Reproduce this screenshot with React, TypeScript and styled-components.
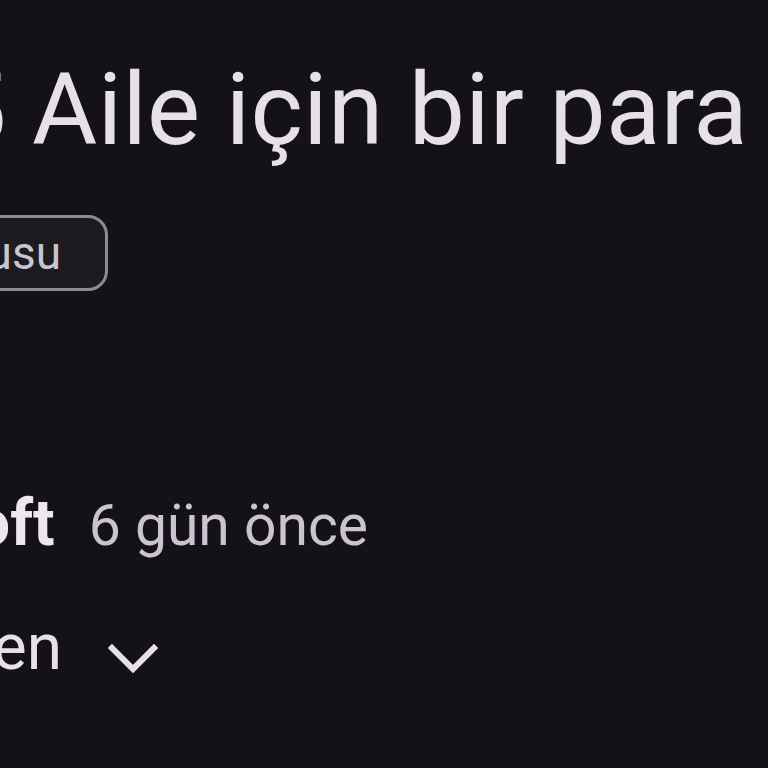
import styled, { createGlobalStyle } from "styled-components";

const GlobalStyle = createGlobalStyle`
  html, body {
    margin: 0;
    padding: 0;
    background: #141218;
    overflow: hidden;
  }
  body {
    font-family: "Roboto", "Open Sans", sans-serif;
    color: #e6e0e9;
  }
`;

const Screen = styled.div`
  width: 768px;
  height: 768px;
  overflow: hidden;
  background: #141218;
  display: flex;
  flex-direction: column;
`;

// rows end at a given x and spill over the left edge
const Row = styled.div<{ $end: number; $top: number }>`
  width: ${(p) => p.$end}px;
  margin-top: ${(p) => p.$top}px;
  display: flex;
  justify-content: flex-end;
  align-items: center;
  white-space: nowrap;
  flex-shrink: 0;
`;

const Title = styled.h1`
  margin: 0;
  font-size: 100px;
  font-weight: 400;
  line-height: 1;
  letter-spacing: 0.4px;
  color: #e6e0e9;
`;

const Chip = styled.span`
  display: inline-flex;
  align-items: center;
  height: 70px;
  padding: 0 44px 0 24px;
  border: 3px solid #8e8a93;
  border-radius: 20px;
  background: #1d1b20;
  font-size: 46px;
  color: #cac4d0;
`;

const Meta = styled.div`
  display: flex;
  align-items: baseline;
  gap: 34px;
`;

const Author = styled.span`
  font-size: 64px;
  font-weight: 700;
  color: #ece6ee;
`;

const Time = styled.span`
  font-size: 57px;
  color: #cac4d0;
`;

const Toggle = styled.div`
  display: flex;
  align-items: center;
  gap: 46px;
  font-size: 64px;
  line-height: 1;
  color: #e6e0e9;
  svg {
    width: 50px;
    height: 30px;
    margin-top: 22px;
  }
`;

export default function App() {
  return (
    <>
      <GlobalStyle />
      <Screen>
        <Row $end={748} $top={60}>
          <Title>Microsoft 365 Aile için bir para</Title>
        </Row>
        <Row $end={108} $top={55}>
          <Chip>Ödül bonusu</Chip>
        </Row>
        <Row $end={368} $top={195}>
          <Meta>
            <Author>Microsoft</Author>
            <Time>6 gün önce</Time>
          </Meta>
        </Row>
        <Row $end={158} $top={55}>
          <Toggle>
            <span>Yanıtı gösteren</span>
            <svg viewBox="0 0 50 30" fill="none" stroke="#e6e0e9" strokeWidth="6" strokeLinecap="square">
              <path d="M4 4 L25 25 L46 4" />
            </svg>
          </Toggle>
        </Row>
      </Screen>
    </>
  );
}
